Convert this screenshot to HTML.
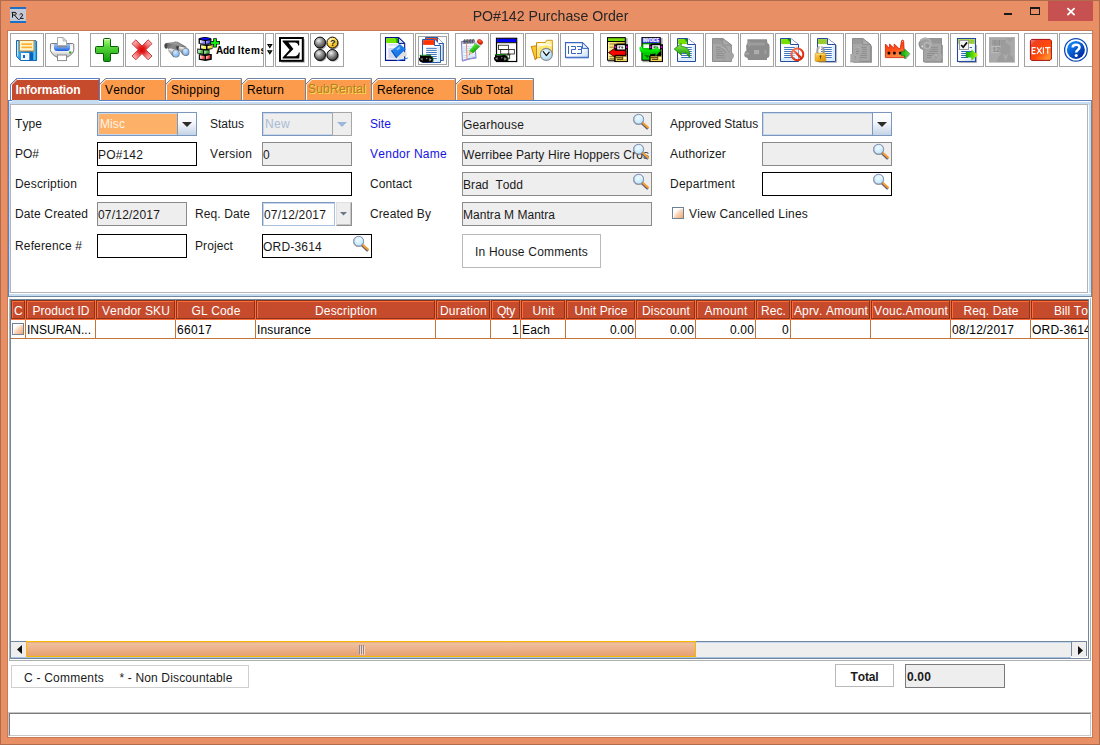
<!DOCTYPE html>
<html><head><meta charset="utf-8"><title>PO#142 Purchase Order</title>
<style>
html,body{margin:0;padding:0}
body{width:1100px;height:745px;position:relative;overflow:hidden;background:#E98F66;font-family:"Liberation Sans",sans-serif;font-size:12px;color:#1a1a1a;font-kerning:none}
div,svg{position:absolute;box-sizing:border-box}
.t{white-space:nowrap;line-height:16px;height:16px}
.b{font-weight:bold}
.tb{background:#fff;border:1px solid #a3a3a3;width:34px;height:34px;top:33px}
.fld{border:1px solid #000;background:#fff;height:24px;line-height:22px;white-space:nowrap;overflow:hidden;padding:1px 0 0 0}
.dis{border-color:#8a8a8a;background:#eee}
.th{top:300px;height:19px;background:#C64B2C;border:1px solid #86361f;box-shadow:inset 1px 1px 0 #ff6c3a;color:#fff;text-align:center;line-height:20px;padding-left:1px;white-space:nowrap;overflow:hidden}
.td{top:320px;height:18px;line-height:20px;white-space:nowrap;overflow:hidden;color:#000}
.tab{top:78px;height:22px}
.tab span{position:absolute;top:4px;line-height:16px;white-space:nowrap}
</style></head><body>

<div style="left:0px;top:0px;width:1100px;height:745px;border:1px solid #b06c4c"></div>
<div style="left:7px;top:30px;width:1086px;height:708px;background:#fff;border:1px solid #c87a55"></div>
<svg style="left:10px;top:7px" width="16" height="16" viewBox="0 0 16 16" ><rect width="16" height="16" fill="#c6cad6"/><rect width="16" height="2" fill="#1e6fc4"/><rect y="14" width="16" height="2" fill="#1e6fc4"/><path d="M2.5 5.4 L2.5 10.6 M1.6 5.4 L5 5.4 Q6.6 5.6 6.2 7.2 Q5.8 8 4.2 8 L2.5 8 M4.4 8 L8.6 12.8" stroke="#161616" stroke-width="1" fill="none"/><path d="M9.6 7.8 Q10.4 6.4 12 6.8 Q13.2 7.6 12.2 9 L10 11.4 L13.6 11.4" stroke="#161616" stroke-width="1" fill="none"/><rect x="9" y="12" width="1" height="1" fill="#2a68c0"/></svg>
<div class="t" id="title" style="left:0;top:6px;width:1101px;text-align:center;font-size:15px;line-height:20px;height:20px;color:#262626;transform:scaleX(0.943)">PO#142 Purchase Order</div>
<div style="left:1004px;top:13px;width:8px;height:2px;background:#1a1a1a"></div>
<div style="left:1030px;top:7px;width:10px;height:8px;border:1px solid #1a1a1a;border-top-width:2px"></div>
<div style="left:1048px;top:1px;width:45px;height:20px;background:#C75050"></div>
<svg style="left:1066px;top:7px" width="10" height="9" viewBox="0 0 10 9"><path d="M1.4 1.1 L8.6 8.1 M8.6 1.1 L1.4 8.1" stroke="#fff" stroke-width="1.8" fill="none"/></svg>
<div class="tb" style="left:10px;"><svg style="left:0px;top:0px" width="32" height="32" viewBox="0 0 32 32" ><defs><linearGradient id="sv1" x1="0" y1="0" x2="1" y2="0"><stop offset="0" stop-color="#8fd4f5"/><stop offset="0.12" stop-color="#3a9fe0"/><stop offset="0.75" stop-color="#0a72c8"/><stop offset="0.9" stop-color="#5ac4f0"/><stop offset="1" stop-color="#1880d0"/></linearGradient></defs><path d="M5.5 6.5 L24.6 6.5 L25.6 7.5 L25.6 26.5 L9.5 26.5 L5.5 22.5 Z" fill="url(#sv1)" stroke="#1668b8" stroke-width="1"/><path d="M6.6 7.5 L6.6 22" stroke="#c8ecff" stroke-width="1"/><rect x="18.5" y="19" width="3.5" height="7" fill="#0860b8"/><rect x="8.5" y="6.5" width="14.5" height="10.5" fill="#fff4cc" stroke="#c4883a" stroke-width="1"/><rect x="10.5" y="9.3" width="10.5" height="1.7" fill="#ffb030"/><rect x="10.5" y="12.5" width="10.5" height="1.7" fill="#ffb030"/><rect x="10" y="19" width="8.2" height="7" fill="#fff"/><rect x="10" y="19" width="8.2" height="7" fill="#e8f0fa" opacity="0.5"/><rect x="12" y="21" width="2" height="3" fill="#1060d0"/></svg></div>
<div class="tb" style="left:45px;"><svg style="left:0px;top:0px" width="32" height="32" viewBox="0 0 32 32" ><defs><linearGradient id="pr1" x1="0" y1="0" x2="0" y2="1"><stop offset="0" stop-color="#e8e8e8"/><stop offset="0.45" stop-color="#fff"/><stop offset="1" stop-color="#b8b8b8"/></linearGradient><linearGradient id="pr2" x1="0" y1="0" x2="0" y2="1"><stop offset="0" stop-color="#9cc0f8"/><stop offset="0.55" stop-color="#5a98f0"/><stop offset="1" stop-color="#1c58dc"/></linearGradient></defs><path d="M4.5 10 Q4.5 9.5 5.5 9.5 L26.5 9.5 Q27.8 9.5 27.8 11 L27.8 16 Q27.5 20 21 23.2 L11 23.2 Q4.5 20 4.4 15.5 Z" fill="url(#pr1)" stroke="#7d7d7d" stroke-width="1"/><path d="M8 10 L24 10 L24 14 Q24 17 21 17 L11 17 Q8 17 8 14 Z" fill="url(#pr2)"/><path d="M11 11 L21 11 L21 13.3 L11 13.3 Z" fill="#8a8a96"/><path d="M11.5 3.5 L17 3.5 L20.5 7 L20.5 11.6 L11.5 11.6 Z" fill="#fff" stroke="#a8a8a8" stroke-width="1"/><path d="M17 3.5 L17 7 L20.5 7 Z" fill="#e4e4e4" stroke="#a8a8a8" stroke-width="0.8"/><circle cx="24.2" cy="18.5" r="1.2" fill="#28b028"/><rect x="11.5" y="21" width="9" height="5.6" fill="#fff" stroke="#8c8c8c" stroke-width="1"/></svg></div>
<div class="tb" style="left:90px;"><svg style="left:0px;top:0px" width="32" height="32" viewBox="0 0 32 32" ><defs><linearGradient id="pl1" x1="0" y1="0" x2="0" y2="1"><stop offset="0" stop-color="#b0ff80"/><stop offset="0.35" stop-color="#5ad83c"/><stop offset="1" stop-color="#0c9a0c"/></linearGradient></defs><path d="M13.5 4.5 L18.5 4.5 Q19.5 4.5 19.5 5.5 L19.5 12.5 L26.5 12.5 Q27.5 12.5 27.5 13.5 L27.5 18.5 Q27.5 19.5 26.5 19.5 L19.5 19.5 L19.5 26.5 Q19.5 27.5 18.5 27.5 L13.5 27.5 Q12.5 27.5 12.5 26.5 L12.5 19.5 L5.5 19.5 Q4.5 19.5 4.5 18.5 L4.5 13.5 Q4.5 12.5 5.5 12.5 L12.5 12.5 L12.5 5.5 Q12.5 4.5 13.5 4.5 Z" fill="url(#pl1)" stroke="#0a5c0a" stroke-width="1"/><path d="M13.7 5.6 L18.3 5.6" stroke="#e8ffd0" stroke-width="1"/></svg></div>
<div class="tb" style="left:125px;"><svg style="left:0px;top:0px" width="32" height="32" viewBox="0 0 32 32" ><defs><radialGradient id="cr1" cx="0.5" cy="0.5" r="0.55"><stop offset="0" stop-color="#dc0000"/><stop offset="0.3" stop-color="#e42020"/><stop offset="0.62" stop-color="#f07070"/><stop offset="1" stop-color="#f8b0b0"/></radialGradient></defs><path d="M9.85 5.83 L16 11.98 L22.15 5.83 L25.97 9.65 L19.82 15.8 L25.97 21.95 L22.15 25.77 L16 19.62 L9.85 25.77 L6.03 21.95 L12.18 15.8 L6.03 9.65 Z" fill="url(#cr1)" stroke="#c02828" stroke-width="0.9" stroke-linejoin="round"/></svg></div>
<div class="tb" style="left:160px;"><svg style="left:0px;top:0px" width="32" height="32" viewBox="0 0 32 32" ><defs><linearGradient id="bn1" x1="0" y1="0" x2="1" y2="0.4"><stop offset="0" stop-color="#4e4e4e"/><stop offset="0.5" stop-color="#8a8a8a"/><stop offset="1" stop-color="#6e6e6e"/></linearGradient><linearGradient id="bn3" x1="0.7" y1="0" x2="0.2" y2="1"><stop offset="0" stop-color="#8c8c8c"/><stop offset="0.28" stop-color="#ececec"/><stop offset="0.55" stop-color="#aaaaaa"/><stop offset="1" stop-color="#4a4a4a"/></linearGradient><radialGradient id="bn2" cx="0.4" cy="0.32" r="0.75"><stop offset="0" stop-color="#d4eaff"/><stop offset="0.55" stop-color="#9cc8fa"/><stop offset="1" stop-color="#6aa4ec"/></radialGradient><filter id="bnb" x="-10%" y="-10%" width="120%" height="120%"><feGaussianBlur stdDeviation="0.35"/></filter></defs><g filter="url(#bnb)"><path d="M3.6 11 Q3.4 9.4 5.4 9 L12.6 8.2 L14 7.5 L16.8 7.8 L25.6 13 L25 16 L18 13 L17 16.4 L8.6 15.4 L4.6 14.6 Z" fill="url(#bn1)"/><path d="M5.6 9.6 L12.8 8.8 L14.2 8.2 L16.4 8.5 L23 12.4 L17.8 11.6 L12.6 10.6 Z" fill="#9c9c9c" opacity="0.75"/><ellipse cx="4.9" cy="12" rx="1.5" ry="2.5" fill="#474747"/><path d="M15 12.6 L18.6 12 L19.4 16 L16.4 17 Z" fill="#3c3c3c"/><path d="M18 12.2 L24.8 13.6 Q27.8 15 27.9 18 L22 21 L17.4 15.6 Z" fill="url(#bn3)"/><path d="M8.6 14.2 L15.6 15.4 Q18 17 18.1 19.6 L12.4 23.2 L6.8 16.4 Z" fill="url(#bn3)"/></g><ellipse cx="15" cy="19.5" rx="3.7" ry="4.1" fill="#707070"/><ellipse cx="24.8" cy="17.9" rx="3.6" ry="4" fill="#707070"/><ellipse cx="14.9" cy="19.4" rx="3.1" ry="3.5" fill="url(#bn2)"/><ellipse cx="24.7" cy="17.8" rx="3" ry="3.4" fill="url(#bn2)"/><circle cx="6.6" cy="14.4" r="0.5" fill="#eee"/></svg></div>
<div class="tb" style="left:275px;"><svg style="left:0px;top:0px" width="32" height="32" viewBox="0 0 32 32" ><rect x="5.2" y="5.2" width="23.6" height="23.6" fill="#9a9a9a" opacity="0.7"/><rect x="4" y="4" width="22.8" height="22.8" fill="#fff" stroke="#000" stroke-width="2"/><path d="M6.6 6.4 L23.2 6.4 L23.2 11.6 L22.2 11.6 Q21.8 8.8 18.8 8.6 L12.4 8.6 L17.4 15 L10.2 22.2 L19.2 22.2 Q22.2 22 22.8 18.6 L23.8 18.6 L23.2 24.4 L6.6 24.4 L6.6 23.4 L13.6 15.8 L6.6 7.6 Z" fill="#000"/></svg></div>
<div class="tb" style="left:310px;"><svg style="left:0px;top:0px" width="32" height="32" viewBox="0 0 32 32" ><defs><radialGradient id="bl1" cx="0.38" cy="0.32" r="0.75"><stop offset="0" stop-color="#f0f0f0"/><stop offset="0.4" stop-color="#9a9a9a"/><stop offset="1" stop-color="#2a2a2a"/></radialGradient><radialGradient id="bl2" cx="0.35" cy="0.3" r="0.8"><stop offset="0" stop-color="#fff8d8"/><stop offset="0.45" stop-color="#ffd848"/><stop offset="1" stop-color="#e8a000"/></radialGradient></defs><circle cx="9.9" cy="9.6" r="5.7" fill="#000" opacity="0.35"/><circle cx="9" cy="8.6" r="5.5" fill="url(#bl1)" stroke="#0a0a0a" stroke-width="1"/><circle cx="22.299999999999997" cy="9.6" r="5.7" fill="#000" opacity="0.35"/><circle cx="21.4" cy="8.6" r="5.5" fill="url(#bl2)" stroke="#0a0a0a" stroke-width="1"/><circle cx="9.9" cy="22" r="5.7" fill="#000" opacity="0.35"/><circle cx="9" cy="21" r="5.5" fill="url(#bl1)" stroke="#0a0a0a" stroke-width="1"/><circle cx="22.299999999999997" cy="22" r="5.7" fill="#000" opacity="0.35"/><circle cx="21.4" cy="21" r="5.5" fill="url(#bl1)" stroke="#0a0a0a" stroke-width="1"/><text x="19" y="11.8" font-family="Liberation Sans" font-weight="bold" font-size="9" fill="#222">?</text></svg></div>
<div class="tb" style="left:380px;"><svg style="left:0px;top:0px" width="32" height="32" viewBox="0 0 32 32" ><defs><linearGradient id="dk1" x1="0" y1="0" x2="1" y2="1"><stop offset="0" stop-color="#2c90f6"/><stop offset="1" stop-color="#0c68dc"/></linearGradient></defs><path d="M4.5 3.6 L17.6 3.6 L23.7 9.4 L23.7 26.4 L4.5 26.4 Z" fill="#f6f8fe" stroke="#00108a" stroke-width="1.1"/><rect x="5.1" y="4.2" width="12" height="4.8" fill="#74e400"/><path d="M14 4.2 L17.1 4.2 L17.1 9 L15.4 9 L15.4 5.8 Z" fill="#0a9800"/><path d="M17.6 3.6 L17.6 9.4 L23.7 9.4 Z" fill="#d0ecf8" stroke="#00108a" stroke-width="1"/><rect x="7.3" y="10" width="9.8" height="1.7" fill="#d8dcf4"/><rect x="7.3" y="14" width="7.2" height="10.2" fill="#d2d7f0"/><path d="M15.2 24.2 L24.9 17 L26 21.2 L15.9 26 Z" fill="#d4d4d0"/><path d="M15.6 24.9 L25.4 18.6 M15.8 25.6 L25.8 20" stroke="#f4f4f0" stroke-width="0.6"/><path d="M15.5 26.6 L26.8 23.5 L26.9 24.4 L15.7 27.3 Z" fill="#2a7ae0"/><path d="M10.1 16.7 L18.9 10.1 L24.9 15.2 L15.2 24.2 Z" fill="url(#dk1)"/><path d="M10.1 16.7 L11 16 L16 23.4 L15.2 24.2 Z" fill="#0a54c0"/><path d="M15.2 15 L18.3 12.6 L19.4 14.2 L16.4 16.6 Z" fill="#78bcfc"/></svg></div>
<div class="tb" style="left:415px;"><svg style="left:0px;top:0px" width="32" height="32" viewBox="0 0 32 32" ><rect x="2.5" y="2.5" width="28" height="28" fill="none" stroke="#a3a3a3" stroke-width="1"/><defs><linearGradient id="dsag" x1="0" y1="0" x2="0" y2="1"><stop offset="0.8" stop-color="#fff"/><stop offset="0.9" stop-color="#d4eafc"/><stop offset="1" stop-color="#eaf5ff"/></linearGradient><linearGradient id="dsah" x1="0" y1="0" x2="1" y2="0"><stop offset="0.78" stop-color="#d4eafc" stop-opacity="0"/><stop offset="0.88" stop-color="#d4eafc"/><stop offset="1" stop-color="#e6f3ff"/></linearGradient></defs><path d="M9.5 3.5 L21.5 3.5 L27.5 9.5 L27.5 26.5 L9.5 26.5 Z" fill="url(#dsag)"/><path d="M9.5 10.5 L27.5 10.5 L27.5 26.5 L9.5 26.5 Z" fill="url(#dsah)"/><rect x="10.1" y="4.1" width="10.9" height="4.5" fill="#f03000"/><path d="M9.5 3.5 L21.5 3.5 L27.5 9.5 L27.5 26.5 L9.5 26.5 Z" fill="none" stroke="#2a5ab0" stroke-width="1"/><path d="M21.5 3.5 L21.5 9.5 L27.5 9.5 Z" fill="#fff"/><path d="M21.5 3.5 L21.5 9.5 L27.5 9.5" fill="none" stroke="#2a5ab0" stroke-width="1" stroke-linejoin="round"/><rect x="26" y="10" width="1.8" height="17" fill="#8a8a8a" opacity="0.5"/><defs><linearGradient id="dsbg" x1="0" y1="0" x2="0" y2="1"><stop offset="0.8" stop-color="#fff"/><stop offset="0.9" stop-color="#d4eafc"/><stop offset="1" stop-color="#eaf5ff"/></linearGradient><linearGradient id="dsbh" x1="0" y1="0" x2="1" y2="0"><stop offset="0.78" stop-color="#d4eafc" stop-opacity="0"/><stop offset="0.88" stop-color="#d4eafc"/><stop offset="1" stop-color="#e6f3ff"/></linearGradient></defs><path d="M6.5 5.5 L18.5 5.5 L24.5 11.5 L24.5 28.5 L6.5 28.5 Z" fill="url(#dsbg)"/><path d="M6.5 12.5 L24.5 12.5 L24.5 28.5 L6.5 28.5 Z" fill="url(#dsbh)"/><rect x="7.1" y="6.1" width="10.9" height="4.8" fill="#ff3300"/><path d="M6.5 5.5 L18.5 5.5 L24.5 11.5 L24.5 28.5 L6.5 28.5 Z" fill="none" stroke="#2a5ab0" stroke-width="1"/><path d="M18.5 5.5 L18.5 11.5 L24.5 11.5 Z" fill="#fff"/><path d="M18.5 5.5 L18.5 11.5 L24.5 11.5" fill="none" stroke="#2a5ab0" stroke-width="1" stroke-linejoin="round"/><rect x="10.2" y="13.850000000000001" width="10.600000000000001" height="0.9" fill="#2a64b6"/><rect x="10.2" y="15.850000000000001" width="10.600000000000001" height="0.9" fill="#2a64b6"/><rect x="10.2" y="17.95" width="10.600000000000001" height="0.9" fill="#2a64b6"/><rect x="10.2" y="19.95" width="10.600000000000001" height="0.9" fill="#2a64b6"/><rect x="10.2" y="22.05" width="10.600000000000001" height="0.9" fill="#2a64b6"/><rect x="10.2" y="24.05" width="10.600000000000001" height="0.9" fill="#2a64b6"/><g transform="translate(2.8,20.9)"><path d="M1.1 0.1 L2.4 1.4 L3.2 0.4 L11.2 0.3 L14.2 3.4 L14 6.8" fill="none" stroke="#0a7a0a" stroke-width="1.1"/><path d="M1.3 0.9 L3 1.2 L11 0.8 Q13.6 2.2 14 4 L13.9 6.9 Q12 7.4 9.7 7.5 L4.2 7.7 Q2 7.4 1.2 6.6 Q0.1 5.4 0.1 4 Q0.4 2.8 1.2 2.5 Z" fill="#000"/><path d="M1.5 4.2 L3.7 3.1 L3.8 5.5 Z" fill="#bdbdbd" stroke="#4a4a4a" stroke-width="0.6"/><path d="M12.8 4.8 L10.5 3.1 L10.5 6.3 Z" fill="#d4d4d4" stroke="#4a4a4a" stroke-width="0.6"/><circle cx="7.9" cy="3.6" r="0.8" fill="#808080"/></g></svg></div>
<div class="tb" style="left:455px;"><svg style="left:0px;top:0px" width="32" height="32" viewBox="0 0 32 32" ><defs><linearGradient id="np1" x1="0.2" y1="0" x2="0.9" y2="0.9"><stop offset="0" stop-color="#78ff48"/><stop offset="0.45" stop-color="#38d020"/><stop offset="0.75" stop-color="#189808"/><stop offset="1" stop-color="#0c6c04"/></linearGradient><radialGradient id="np2" cx="0.38" cy="0.4" r="0.7"><stop offset="0" stop-color="#ff6a38"/><stop offset="0.6" stop-color="#e02810"/><stop offset="1" stop-color="#a81000"/></radialGradient></defs><path d="M5.4 7.6 L18.5 6.8 L20 23.9 Q14 24.4 6.4 26.9 Z" fill="#f6f8ff" stroke="#8484cc" stroke-width="1.1" stroke-linejoin="round"/><path d="M6.5 25.9 Q14 23.6 19.9 23 L20 24.2 Q14 24.6 6.5 27 Z" fill="#9090d4"/><path d="M6 8.4 L18.2 7.6 L18.3 9.4 L6.1 10.2 Z" fill="#dcdcf4"/><path d="M6.30 13.10 L19.00 12.00" stroke="#b4d8f8" stroke-width="0.8"/><path d="M6.35 15.00 L19.10 13.90" stroke="#b4d8f8" stroke-width="0.8"/><path d="M6.40 16.90 L19.20 15.80" stroke="#b4d8f8" stroke-width="0.8"/><path d="M6.45 18.80 L19.30 17.70" stroke="#b4d8f8" stroke-width="0.8"/><path d="M6.50 21.70 L19.40 20.60" stroke="#b4d8f8" stroke-width="0.8"/><path d="M6.55 23.50 L19.50 22.40" stroke="#b4d8f8" stroke-width="0.8"/><path d="M10.4 10 L11 25.3" stroke="#f08060" stroke-width="0.95"/><path d="M7.00 9.90 Q6.90 6.40 8.50 5.50 Q9.00 7.20 7.90 9.60" fill="none" stroke="#222" stroke-width="0.55"/><path d="M8.55 9.84 Q8.45 6.34 10.05 5.44 Q10.55 7.14 9.45 9.54" fill="none" stroke="#222" stroke-width="0.55"/><path d="M10.10 9.78 Q10.00 6.28 11.60 5.38 Q12.10 7.08 11.00 9.48" fill="none" stroke="#222" stroke-width="0.55"/><path d="M11.65 9.72 Q11.55 6.22 13.15 5.32 Q13.65 7.02 12.55 9.42" fill="none" stroke="#222" stroke-width="0.55"/><path d="M13.20 9.66 Q13.10 6.16 14.70 5.26 Q15.20 6.96 14.10 9.36" fill="none" stroke="#222" stroke-width="0.55"/><path d="M14.75 9.60 Q14.65 6.10 16.25 5.20 Q16.75 6.90 15.65 9.30" fill="none" stroke="#222" stroke-width="0.55"/><path d="M16.30 9.54 Q16.20 6.04 17.80 5.14 Q18.30 6.84 17.20 9.24" fill="none" stroke="#222" stroke-width="0.55"/><path d="M12.9 17 L19.7 9.1 L24.2 12.2 L17 19.3 Z" fill="url(#np1)"/><path d="M12.9 17 L17 19.3 L12.9 20.7 Z" fill="#e4c08c"/><path d="M12.9 20.7 L13.05 19.5 L14 20.3 Z" fill="#2a2a2a"/><path d="M19.7 9.1 L20.7 7.9 L25.1 11.1 L24.2 12.2 Z" fill="#e8e8f0" stroke="#a8a8b8" stroke-width="0.4"/><ellipse cx="24" cy="7.8" rx="3.1" ry="2.4" transform="rotate(38 24 7.8)" fill="url(#np2)"/></svg></div>
<div class="tb" style="left:490px;"><svg style="left:0px;top:0px" width="32" height="32" viewBox="0 0 32 32" ><rect x="5.5" y="4.3" width="20.2" height="23.2" fill="#fff" stroke="#000" stroke-width="1.2"/><rect x="6.1" y="4.9" width="19" height="3.3" fill="#0000ff"/><path d="M5.5 8.7 L25.7 8.7" stroke="#000" stroke-width="1"/><rect x="7.6" y="11.2" width="9.8" height="4.2" fill="#fff" stroke="#0c0a00" stroke-width="0.75"/><rect x="9.7" y="15.4" width="13.6" height="4.6" fill="#fff" stroke="#0c0a00" stroke-width="0.75"/><path d="M17.7 15.4 L17.7 20" stroke="#0c0a00" stroke-width="0.75"/><path d="M14 21 L18.6 21 L18.6 24.8 L14 24.8" fill="#fff" stroke="#0c0a00" stroke-width="0.75"/><path d="M16 20 L19.5 20.6" stroke="#0c0a00" stroke-width="0.7"/><g transform="translate(2.8,20.2)"><path d="M1.1 0.1 L2.4 1.4 L3.2 0.4 L11.2 0.3 L14.2 3.4 L14 6.8" fill="none" stroke="#0a7a0a" stroke-width="1.1"/><path d="M1.3 0.9 L3 1.2 L11 0.8 Q13.6 2.2 14 4 L13.9 6.9 Q12 7.4 9.7 7.5 L4.2 7.7 Q2 7.4 1.2 6.6 Q0.1 5.4 0.1 4 Q0.4 2.8 1.2 2.5 Z" fill="#000"/><path d="M1.5 4.2 L3.7 3.1 L3.8 5.5 Z" fill="#bdbdbd" stroke="#4a4a4a" stroke-width="0.6"/><path d="M12.8 4.8 L10.5 3.1 L10.5 6.3 Z" fill="#d4d4d4" stroke="#4a4a4a" stroke-width="0.6"/><circle cx="7.9" cy="3.6" r="0.8" fill="#808080"/></g></svg></div>
<div class="tb" style="left:525px;"><svg style="left:0px;top:0px" width="32" height="32" viewBox="0 0 32 32" ><defs><linearGradient id="fc1" x1="0" y1="0" x2="1" y2="1"><stop offset="0" stop-color="#fffdf0"/><stop offset="0.45" stop-color="#fff4a8"/><stop offset="1" stop-color="#f8d030"/></linearGradient><radialGradient id="fc2" cx="0.4" cy="0.35" r="0.75"><stop offset="0" stop-color="#f0fbff"/><stop offset="1" stop-color="#a0d4f4"/></radialGradient></defs><path d="M10.5 8.5 L19.5 8.5 L20.5 6.3 L26.3 6.3 L26.6 21 L10.5 24 Z" fill="url(#fc1)" stroke="#d89818" stroke-width="1"/><path d="M11.6 10 L25.4 10 L25.4 12 L12 12.4 Z" fill="#fffce8" opacity="0.8"/><path d="M5.2 12.5 L10.5 11.8 L10.6 24 L9.2 25.6 Z" fill="#f8c830" stroke="#d08810" stroke-width="1"/><path d="M10.6 9 L10.6 24.6 L9.2 25.6 L10 24" fill="none" stroke="#c88010" stroke-width="0.8"/><path d="M12.4 12.6 L22 11.2 L22.6 20 L11.6 23.8 Z" fill="#ffe040" opacity="0.6"/><circle cx="20.3" cy="20.4" r="6" fill="url(#fc2)" stroke="#8a8c90" stroke-width="1.1"/><path d="M17.3 17.6 L20.4 21.6 L23.2 18.2" fill="none" stroke="#0a0a0a" stroke-width="1.15" stroke-linejoin="round" stroke-linecap="round"/></svg></div>
<div class="tb" style="left:560px;"><svg style="left:0px;top:0px" width="32" height="32" viewBox="0 0 32 32" ><defs><linearGradient id="n1" x1="0" y1="0" x2="1" y2="1"><stop offset="0.55" stop-color="#fff"/><stop offset="1" stop-color="#c4dcf8"/></linearGradient></defs><path d="M4.5 8.6 L21.4 8.6 L27.4 14.4 L27.4 23.4 L4.5 23.4 Z" fill="url(#n1)" stroke="#3a66c0" stroke-width="1.1"/><path d="M21.4 8.6 L21.4 14.4 L27.4 14.4 Z" fill="#e4f0fc" stroke="#3a66c0" stroke-width="1"/><path d="M5 24.2 L27.6 24.2" stroke="#88a8e0" stroke-width="0.8"/><path d="M7.5 12 L7.5 20" stroke="#3a66c0" stroke-width="1" fill="none"/><path d="M10 12.5 L14.5 12.5 L14.5 15.5 L10.5 15.5 L10.5 19.5 L15 19.5" stroke="#3a66c0" stroke-width="1" fill="none"/><path d="M16 12.5 L20.5 12.5 L20.5 19.5 L16 19.5 M17 15.5 L20.5 15.5" stroke="#3a66c0" stroke-width="1" fill="none"/></svg></div>
<div class="tb" style="left:600px;"><svg style="left:0px;top:0px" width="32" height="32" viewBox="0 0 32 32" ><defs><linearGradient id="po1" x1="0" y1="0" x2="1" y2="0"><stop offset="0" stop-color="#fff0a0"/><stop offset="0.5" stop-color="#f0d860"/><stop offset="1" stop-color="#d8b838"/></linearGradient></defs><rect x="7" y="4" width="19.6" height="24.2" fill="#000" opacity="0.35"/><rect x="6" y="3.1" width="18.8" height="23.6" fill="#000"/><rect x="7" y="4.2" width="16.8" height="2.8" fill="#78e000"/><rect x="7" y="8" width="16.8" height="17.7" fill="url(#po1)"/><path d="M8.4 10 L15 10 M8.4 13.2 L13 13.2 M8.4 22.6 L13.6 22.6 M8.4 24.6 L13.6 24.6" stroke="#6a5810" stroke-width="0.7"/><path d="M15.4 9.4 L24.6 9.4 L24.6 10.2 L27 10.2 L27 28 L13.2 28 L13.2 21.8 L14 21.8 L14 16.4 L13.2 16.4 L13.2 10.2 L15.4 10.2 Z" fill="#000"/><rect x="16.2" y="11.2" width="7.7" height="4.3" fill="#fff"/><path d="M17.4 12.4 Q18.4 11.8 19 12.6 Q19.4 14.2 18.6 14.6 Q17.4 14.6 17.4 12.4 M20.4 12.4 Q22.4 12 22.4 14 Q21.2 15 20.4 14 Z" fill="#555"/><path d="M18.6 12 L20.6 13.4" stroke="#555" stroke-width="0.6"/><rect x="13.9" y="11.8" width="1.3" height="2.4" fill="#e800e8"/><rect x="25" y="11.8" width="1.3" height="2.4" fill="#e800e8"/><rect x="25" y="15.6" width="0.9" height="1" fill="#f0dc70"/><rect x="25" y="17.5" width="0.9" height="1" fill="#f0dc70"/><rect x="25" y="19.4" width="0.9" height="1" fill="#f0dc70"/><rect x="25" y="21.3" width="0.9" height="1" fill="#f0dc70"/><rect x="14.6" y="22.3" width="11.3" height="4.8" fill="#f0d050"/><path d="M14.6 23.7 L21.6 23.7 M16 25.4 L21.6 25.4" stroke="#1a1400" stroke-width="0.8"/><path d="M21.6 22.3 L21.6 26" stroke="#1a1400" stroke-width="0.6"/><rect x="22.9" y="23.4" width="2.3" height="1.5" fill="#fff"/><path d="M7.4 18.6 L13.8 14.2 L13.8 16.4 L24.8 16.4 L24.8 21.2 L13.8 21.2 L13.8 23 Z" fill="#ff0000" stroke="#000" stroke-width="0.7" stroke-linejoin="round"/></svg></div>
<div class="tb" style="left:635px;"><svg style="left:0px;top:0px" width="32" height="32" viewBox="0 0 32 32" ><defs><linearGradient id="iv1" x1="0" y1="0" x2="0" y2="1"><stop offset="0" stop-color="#50ff50"/><stop offset="0.5" stop-color="#00e800"/><stop offset="1" stop-color="#00a800"/></linearGradient></defs><rect x="6.4" y="4" width="20.2" height="24.2" fill="#000" opacity="0.35"/><rect x="5.4" y="3.1" width="19.4" height="23.6" fill="#000"/><rect x="6.4" y="4.2" width="17.4" height="4.6" fill="#2828f8"/><text x="6.9" y="8.3" font-family="Liberation Sans" font-weight="bold" font-size="5.2" fill="#fff" stroke="#fff" stroke-width="0.25" textLength="16.2" lengthAdjust="spacingAndGlyphs">INVOICE</text><rect x="6.4" y="9.4" width="17.4" height="16.3" fill="#00d800"/><rect x="7.4" y="10.4" width="8" height="3.6" fill="#e8ffe8"/><path d="M15.4 9.4 L24.6 9.4 L24.6 10.2 L27 10.2 L27 28 L13.2 28 L13.2 21.8 L14 21.8 L14 16.4 L13.2 16.4 L13.2 10.2 L15.4 10.2 Z" fill="#000"/><rect x="16.2" y="11.2" width="7.7" height="4.3" fill="#fff"/><path d="M17.4 12.4 Q18.4 11.8 19 12.6 Q19.4 14.2 18.6 14.6 Q17.4 14.6 17.4 12.4 M20.4 12.4 Q22.4 12 22.4 14 Q21.2 15 20.4 14 Z" fill="#555"/><path d="M18.6 12 L20.6 13.4" stroke="#555" stroke-width="0.6"/><rect x="13.9" y="11.8" width="1.3" height="2.4" fill="#e800e8"/><rect x="25" y="11.8" width="1.3" height="2.4" fill="#e800e8"/><rect x="25" y="15.6" width="0.9" height="1" fill="#f0dc70"/><rect x="25" y="17.5" width="0.9" height="1" fill="#f0dc70"/><rect x="25" y="19.4" width="0.9" height="1" fill="#f0dc70"/><rect x="25" y="21.3" width="0.9" height="1" fill="#f0dc70"/><rect x="14.6" y="22.3" width="11.3" height="4.8" fill="#f0d050"/><path d="M14.6 23.7 L21.6 23.7 M16 25.4 L21.6 25.4" stroke="#1a1400" stroke-width="0.8"/><path d="M21.6 22.3 L21.6 26" stroke="#1a1400" stroke-width="0.6"/><rect x="22.9" y="23.4" width="2.3" height="1.5" fill="#fff"/><path d="M3.8 13.4 Q3.2 18.6 9 19.8 Q14.8 20.6 19.6 19.2 L19.8 21.8 L24.6 16.6 L19.2 12 L19.4 14.8 Q13 16.6 8.6 15.6 Q5.4 14.6 6.2 12.2 Z" fill="url(#iv1)" stroke="#00c000" stroke-width="0.5"/><path d="M7.8 20.6 L11.6 24.2 L13.4 21.6 Z" fill="#007800"/></svg></div>
<div class="tb" style="left:670px;"><svg style="left:0px;top:0px" width="32" height="32" viewBox="0 0 32 32" ><defs><linearGradient id="dbg" x1="0" y1="0" x2="0" y2="1"><stop offset="0.8" stop-color="#fff"/><stop offset="0.9" stop-color="#d4eafc"/><stop offset="1" stop-color="#eaf5ff"/></linearGradient><linearGradient id="dbh" x1="0" y1="0" x2="1" y2="0"><stop offset="0.78" stop-color="#d4eafc" stop-opacity="0"/><stop offset="0.88" stop-color="#d4eafc"/><stop offset="1" stop-color="#e6f3ff"/></linearGradient></defs><path d="M6.5 4.5 L16.5 4.5 L24.5 10.5 L24.5 27.5 L6.5 27.5 Z" fill="url(#dbg)"/><path d="M6.5 11.5 L24.5 11.5 L24.5 27.5 L6.5 27.5 Z" fill="url(#dbh)"/><rect x="7.1" y="5.1" width="9.299999999999999" height="5" fill="#78e000"/><path d="M6.5 4.5 L16.5 4.5 L24.5 10.5 L24.5 27.5 L6.5 27.5 Z" fill="none" stroke="#2a4aa0" stroke-width="1"/><path d="M16.5 4.5 L16.5 10.5 L24.5 10.5 Z" fill="#fff"/><path d="M16.5 4.5 L16.5 10.5 L24.5 10.5" fill="none" stroke="#2a4aa0" stroke-width="1" stroke-linejoin="round"/><rect x="10.1" y="12.950000000000001" width="10.700000000000001" height="0.9" fill="#2a64b6"/><rect x="10.1" y="14.950000000000001" width="10.700000000000001" height="0.9" fill="#2a64b6"/><rect x="10.1" y="17.0" width="10.700000000000001" height="0.9" fill="#2a64b6"/><rect x="10.1" y="19.05" width="10.700000000000001" height="0.9" fill="#2a64b6"/><rect x="10.1" y="21.05" width="10.700000000000001" height="0.9" fill="#2a64b6"/><rect x="10.1" y="23.1" width="10.700000000000001" height="0.9" fill="#2a64b6"/><path d="M13.2 5.1 L16.4 5.1 L16.4 8.6 Z" fill="#0a9800"/><defs><linearGradient id="gb1" x1="0" y1="0" x2="0" y2="1"><stop offset="0" stop-color="#a8f060"/><stop offset="0.5" stop-color="#48c020"/><stop offset="1" stop-color="#188808"/></linearGradient></defs><path d="M3.2 15 L10.2 9.6 L10.2 12.4 Q16.8 12.6 18.4 18 Q19 20.4 18.4 23.4 Q16 18 10.2 18.2 L10.2 21 Z" fill="url(#gb1)" stroke="#188810" stroke-width="0.8" stroke-linejoin="round"/></svg></div>
<div class="tb" style="left:705px;"><svg style="left:0px;top:0px" width="32" height="32" viewBox="0 0 32 32" ><ellipse cx="24.4" cy="21.8" rx="3.4" ry="3.6" fill="#a2a2a2"/><path d="M6.5 4.5 L16.7 4.5 L25.4 11 L25.4 27.5 L6.5 27.5 Z" fill="#a6a6a6" stroke="#8c8c8c" stroke-width="1"/><rect x="7" y="5" width="9.4" height="5" fill="#9b9b9b"/><path d="M13.4 5 L16.4 5 L16.4 8.4 Z" fill="#929292"/><path d="M16.7 4.5 L16.7 11 L25.4 11 Z" fill="#aaaaaa" stroke="#8c8c8c" stroke-width="0.9"/><path d="M10 13.3 L14.6 13.3 M17 13.3 L20.8 13.3 M10 15.3 L14.6 15.3 M18.4 15.3 L20.8 15.3 M10 17.4 L17 17.4 M11 19.5 L17.6 19.5 M11 21.5 L18 21.5 M11 23.6 L18 23.6" stroke="#8c8c8c" stroke-width="0.9"/><path d="M10.2 19.2 L11.6 20.4 L10.2 21.6 M10.2 22 L11.6 23.2 L10.2 24.4" stroke="#8e8e8e" stroke-width="0.7" fill="none"/><path d="M14.8 12.4 Q19.6 14.4 21.6 18.6" stroke="#8e8e8e" stroke-width="3.2" fill="none"/><path d="M14.8 12.4 Q19.6 14.4 21.6 18.6" stroke="#adadad" stroke-width="1.8" fill="none"/><ellipse cx="24.4" cy="21.8" rx="3.2" ry="3.4" fill="#a4a4a4"/><path d="M17 20 L17 27 M19 18.4 L19 27" stroke="#989898" stroke-width="0.7"/></svg></div>
<div class="tb" style="left:740px;"><svg style="left:0px;top:0px" width="32" height="32" viewBox="0 0 32 32" ><defs><filter id="gpb" x="-10%" y="-10%" width="120%" height="120%"><feGaussianBlur stdDeviation="0.5"/></filter></defs><g filter="url(#gpb)"><path d="M6.4 5.2 L26 5.2 L26.4 9 Q28.8 10 28.6 13 L28.4 22 Q28 24 26 24 L26 26 L7 26 L6.6 24 Q3.4 23.4 3.2 21 Q3.4 17.6 5.4 16.6 L5 11.4 L6.4 10 Z" fill="#8c8c8c"/><path d="M5.4 10 L9 6.4 L9 8.4 L24 8.4 L24 11.6 L9 11.6 L9 13.6 Z" fill="#9c9c9c"/><rect x="13" y="16" width="5.2" height="4.2" fill="#adadad"/><rect x="23.4" y="16" width="2" height="4.2" fill="#9e9e9e"/><path d="M4.4 19.6 Q5.8 17.4 8 19 L8 21 Q5.6 20 4.4 21.4 Z" fill="#a6a6a6"/></g></svg></div>
<div class="tb" style="left:775px;"><svg style="left:0px;top:0px" width="32" height="32" viewBox="0 0 32 32" ><defs><linearGradient id="dng" x1="0" y1="0" x2="0" y2="1"><stop offset="0.8" stop-color="#fff"/><stop offset="0.9" stop-color="#d4eafc"/><stop offset="1" stop-color="#eaf5ff"/></linearGradient><linearGradient id="dnh" x1="0" y1="0" x2="1" y2="0"><stop offset="0.78" stop-color="#d4eafc" stop-opacity="0"/><stop offset="0.88" stop-color="#d4eafc"/><stop offset="1" stop-color="#e6f3ff"/></linearGradient></defs><path d="M4.5 4.5 L14.5 4.5 L22.5 10.5 L22.5 27.5 L4.5 27.5 Z" fill="url(#dng)"/><path d="M4.5 11.5 L22.5 11.5 L22.5 27.5 L4.5 27.5 Z" fill="url(#dnh)"/><rect x="5.1" y="5.1" width="9.3" height="5" fill="#78e000"/><path d="M4.5 4.5 L14.5 4.5 L22.5 10.5 L22.5 27.5 L4.5 27.5 Z" fill="none" stroke="#2a4aa0" stroke-width="1"/><path d="M14.5 4.5 L14.5 10.5 L22.5 10.5 Z" fill="#fff"/><path d="M14.5 4.5 L14.5 10.5 L22.5 10.5" fill="none" stroke="#2a4aa0" stroke-width="1" stroke-linejoin="round"/><rect x="8.1" y="12.950000000000001" width="10.700000000000001" height="0.9" fill="#2a64b6"/><rect x="8.1" y="14.950000000000001" width="10.700000000000001" height="0.9" fill="#2a64b6"/><rect x="8.1" y="17.0" width="10.700000000000001" height="0.9" fill="#2a64b6"/><rect x="8.1" y="19.05" width="10.700000000000001" height="0.9" fill="#2a64b6"/><rect x="8.1" y="21.05" width="10.700000000000001" height="0.9" fill="#2a64b6"/><rect x="8.1" y="23.1" width="10.700000000000001" height="0.9" fill="#2a64b6"/><path d="M11.2 5.1 L14.4 5.1 L14.4 8.6 Z" fill="#0a9800"/><defs><linearGradient id="dn2" x1="0" y1="0" x2="1" y2="1"><stop offset="0" stop-color="#f88868"/><stop offset="0.5" stop-color="#e83818"/><stop offset="1" stop-color="#d02808"/></linearGradient></defs><circle cx="21.4" cy="20.4" r="5.9" fill="#fff" fill-opacity="0.45" stroke="url(#dn2)" stroke-width="2"/><path d="M17.4 16.2 L25.6 24.4" stroke="url(#dn2)" stroke-width="2.2"/></svg></div>
<div class="tb" style="left:810px;"><svg style="left:0px;top:0px" width="32" height="32" viewBox="0 0 32 32" ><path d="M8 28.4 L25.6 28.4 L25.6 11" stroke="#9a9a9a" stroke-width="1" fill="none" opacity="0.7"/><defs><linearGradient id="dlg" x1="0" y1="0" x2="0" y2="1"><stop offset="0.8" stop-color="#fff"/><stop offset="0.9" stop-color="#d4eafc"/><stop offset="1" stop-color="#eaf5ff"/></linearGradient><linearGradient id="dlh" x1="0" y1="0" x2="1" y2="0"><stop offset="0.78" stop-color="#d4eafc" stop-opacity="0"/><stop offset="0.88" stop-color="#d4eafc"/><stop offset="1" stop-color="#e6f3ff"/></linearGradient></defs><path d="M6.5 4.5 L16.5 4.5 L24.5 10.5 L24.5 27.5 L6.5 27.5 Z" fill="url(#dlg)"/><path d="M6.5 11.5 L24.5 11.5 L24.5 27.5 L6.5 27.5 Z" fill="url(#dlh)"/><rect x="7.1" y="5.1" width="9.299999999999999" height="5" fill="#98cc30"/><path d="M6.5 4.5 L16.5 4.5 L24.5 10.5 L24.5 27.5 L6.5 27.5 Z" fill="none" stroke="#2a4aa0" stroke-width="1"/><path d="M16.5 4.5 L16.5 10.5 L24.5 10.5 Z" fill="#fff"/><path d="M16.5 4.5 L16.5 10.5 L24.5 10.5" fill="none" stroke="#2a4aa0" stroke-width="1" stroke-linejoin="round"/><rect x="10.1" y="12.950000000000001" width="10.700000000000001" height="0.9" fill="#2a64b6"/><rect x="10.1" y="14.950000000000001" width="10.700000000000001" height="0.9" fill="#2a64b6"/><rect x="10.1" y="17.0" width="10.700000000000001" height="0.9" fill="#2a64b6"/><rect x="10.1" y="19.05" width="10.700000000000001" height="0.9" fill="#2a64b6"/><rect x="10.1" y="21.05" width="10.700000000000001" height="0.9" fill="#2a64b6"/><rect x="10.1" y="23.1" width="10.700000000000001" height="0.9" fill="#2a64b6"/><defs><linearGradient id="pk1" x1="0" y1="0" x2="1" y2="1"><stop offset="0" stop-color="#ffd860"/><stop offset="0.5" stop-color="#f0b020"/><stop offset="1" stop-color="#d88c00"/></linearGradient><linearGradient id="pk2" x1="0" y1="0" x2="1" y2="0"><stop offset="0" stop-color="#a0a0a0"/><stop offset="0.35" stop-color="#d2d2d2"/><stop offset="0.5" stop-color="#f4f4f4"/><stop offset="0.65" stop-color="#c4c4c4"/><stop offset="1" stop-color="#989898"/></linearGradient></defs><path d="M6.4 19.799999999999997 L6.4 16.2 Q6.4 13.1 9.5 13.1 Q12.600000000000001 13.1 12.600000000000001 16.2 L12.600000000000001 19.799999999999997" fill="none" stroke="url(#pk2)" stroke-width="2.1"/><rect x="4.2" y="19.2" width="10.6" height="8.2" rx="0.8" fill="url(#pk1)" stroke="#c88a10" stroke-width="0.6"/><path d="M4.7 20.2 L14.2 20.2" stroke="#ffe890" stroke-width="0.8"/><circle cx="9.5" cy="22.299999999999997" r="0.95" fill="#6e4204"/><path d="M8.9 22.6 L10.100000000000001 22.6 L9.8 25.2 L9.2 25.2 Z" fill="#6e4204"/></svg></div>
<div class="tb" style="left:845px;"><svg style="left:0px;top:0px" width="32" height="32" viewBox="0 0 32 32" ><path d="M7.4 5.4 L17 5.4 L25.9 12 L25.9 28.7 L7.4 28.7 Z" fill="#8f8f8f"/><path d="M6.5 4.5 L16.7 4.5 L24.6 10.6 L24.6 27.4 L6.5 27.4 Z" fill="#a7a7a7" stroke="#8c8c8c" stroke-width="1"/><rect x="7" y="5" width="9.4" height="5" fill="#9a9a9a"/><path d="M16.7 4.5 L16.7 10.6 L24.6 10.6 Z" fill="#acacac" stroke="#8c8c8c" stroke-width="0.9"/><path d="M15.2 13.3 L20.8 13.3 M16 15.3 L20.8 15.3 M16 17.4 L20.8 17.4 M15.2 19.5 L20.8 19.5 M14.6 21.5 L20.8 21.5 M14.6 23.6 L20.8 23.6 M10 17.4 L13.4 17.4 M10 19.5 L12.6 19.5" stroke="#8a8a8a" stroke-width="0.9"/><path d="M9.2 14.2 Q11.4 11.6 14 13.6 Q14.6 15.4 13 16" stroke="#b0b0b0" stroke-width="1.1" fill="none"/><path d="M9.6 15 L13.6 15" stroke="#989898" stroke-width="0.8"/><rect x="4.3" y="20" width="9.8" height="8" fill="#a9a9a9"/><path d="M4.3 28 L14.1 28 L14.1 20.6" stroke="#9a9a9a" stroke-width="0.8" fill="none"/><circle cx="9.2" cy="22.8" r="0.85" fill="#979797"/><path d="M8.7 23 L9.7 23 L9.5 25.6 L8.9 25.6 Z" fill="#979797"/></svg></div>
<div class="tb" style="left:880px;"><svg style="left:0px;top:0px" width="32" height="32" viewBox="0 0 32 32" ><defs><linearGradient id="fa1" x1="0" y1="0" x2="0.3" y2="1"><stop offset="0" stop-color="#ff2800"/><stop offset="0.6" stop-color="#ff5018"/><stop offset="1" stop-color="#ff8840"/></linearGradient><linearGradient id="fa2" x1="0" y1="0" x2="1" y2="0"><stop offset="0" stop-color="#10a010"/><stop offset="1" stop-color="#58e838"/></linearGradient></defs><path d="M4.4 23.6 L4.4 10 L8.6 14.4 L8.6 10 L13.2 14.4 L13.2 10 L18 14.6 L19.2 14.6 L20.6 6.6 Q21.6 5.6 22.6 6.6 L23.6 23.6 Z" fill="url(#fa1)" stroke="#c82000" stroke-width="0.8" stroke-linejoin="round"/><path d="M21 7.6 L22.2 7.2" stroke="#ffd8c8" stroke-width="0.9"/><rect x="6.6" y="17.8" width="2.6" height="2.6" rx="0.6" fill="#0a0408"/><rect x="12.1" y="17.8" width="2.6" height="2.6" rx="0.6" fill="#0a0818"/><rect x="17.9" y="17.8" width="2.6" height="2.6" rx="0.6" fill="#0a1028"/><path d="M20.4 17.4 L23.6 17.4 L23.6 15 L28.6 19.6 L23.8 24.4 L23.6 21.8 L20.4 21.8 Z" fill="url(#fa2)" stroke="#0a7a0a" stroke-width="0.6" stroke-linejoin="round"/><path d="M23.6 24 L24.6 25 L28.8 20.4" stroke="#222" stroke-width="0.8" fill="none" opacity="0.6"/></svg></div>
<div class="tb" style="left:915px;"><svg style="left:0px;top:0px" width="32" height="32" viewBox="0 0 32 32" ><path d="M26 11 L26.9 11 L26.9 28.7 L8.4 28.7 L8.4 28 L26 28 Z" fill="#959595"/><rect x="7.6" y="4.6" width="17.9" height="23" fill="#a6a6a6" stroke="#8e8e8e" stroke-width="1"/><rect x="8.1" y="5.1" width="16.9" height="4.4" fill="#969696"/><path d="M14.8 13.3 L21.9 13.3 M14.8 15.3 L21.9 15.3 M13 17.4 L21.9 17.4 M11 19.5 L21.9 19.5 M11 21.5 L16.6 21.5 M11 23.6 L15 23.6" stroke="#8a8a8a" stroke-width="0.9"/><path d="M16 26 Q15 21.6 19 20.4 L18.6 18.6 L22.6 20.6 L20 23.6 L19.6 22 Q17.4 22.8 18.6 26 Z" fill="#b0b0b0" stroke="#939393" stroke-width="0.5"/><path d="M21 19.8 Q26 19.6 27.4 21.4 Q26.4 25.6 21.6 27" fill="#aaaaaa" opacity="0.7"/><circle cx="9.3" cy="10.1" r="6.5" fill="#9e9e9e"/><path d="M4.6 6.4 Q8.6 2.8 13.6 6 Q15.8 8.6 15.2 11.4" stroke="#b2b2b2" stroke-width="1.5" fill="none"/><circle cx="11.2" cy="11.6" r="3.1" fill="none" stroke="#b6b6b6" stroke-width="1.3"/><circle cx="11.6" cy="12" r="1.6" fill="#949494"/><path d="M3.6 8 Q2.6 12 5.4 14.6" stroke="#8e8e8e" stroke-width="1.4" fill="none"/><ellipse cx="6.3" cy="12.4" rx="0.6" ry="0.9" fill="#f6f6f6"/></svg></div>
<div class="tb" style="left:950px;"><svg style="left:0px;top:0px" width="32" height="32" viewBox="0 0 32 32" ><defs><linearGradient id="ca1" x1="0" y1="0" x2="1" y2="0"><stop offset="0" stop-color="#08a808"/><stop offset="0.55" stop-color="#58d810"/><stop offset="1" stop-color="#d8f800"/></linearGradient><linearGradient id="ca2" x1="0" y1="0" x2="1" y2="1"><stop offset="0.5" stop-color="#fff"/><stop offset="1" stop-color="#c8e0fa"/></linearGradient></defs><path d="M8 28.4 L25.6 28.4 L25.6 11" stroke="#8a8a8a" stroke-width="1" fill="none" opacity="0.7"/><rect x="6.5" y="4.5" width="18" height="23" fill="url(#ca2)" stroke="#2a4aa0" stroke-width="1.1"/><rect x="7.2" y="5.2" width="16.6" height="4.6" fill="#98cc30"/><path d="M18.6 13.5 L21 13.5 M10.2 17.5 L21 17.5 M10.2 19.5 L17 19.5 M10.2 21.5 L17 21.5 M10.2 23.5 L17 23.5" stroke="#2a6ab8" stroke-width="1"/><rect x="8.5" y="6.5" width="9" height="9" fill="#f4f4f4" stroke="#9a9a9a" stroke-width="1"/><path d="M10.2 11 L12.2 13.2 L16 8.4" stroke="#0a0a0a" stroke-width="1.7" fill="none"/><path d="M14.8 18 L20.4 18 L20.4 15.2 L27 21 L20.4 26.8 L20.4 23.6 L14.8 23.6 Z" fill="url(#ca1)"/></svg></div>
<div class="tb" style="left:985px;"><svg style="left:0px;top:0px" width="32" height="32" viewBox="0 0 32 32" ><rect x="3" y="3" width="26" height="25.6" fill="#a9a9a9"/><path d="M3.5 3.5 L28.5 3.5 L28.5 28" stroke="#b6b6b6" stroke-width="0.8" fill="none"/><path d="M7 6 L7 11.6 M8.8 6 L8.8 11.6 M10 6 L10 11.6 M12 6 L12 11.6 M13.6 6 L13.6 11.6" stroke="#8c8c8c" stroke-width="1"/><rect x="14.6" y="6" width="5" height="5.6" fill="#9a9a9a"/><rect x="5" y="12.4" width="10" height="6" fill="#b2b2b2"/><path d="M5 12.4 L15 12.4 M5 18.4 L13 18.4" stroke="#c0c0c0" stroke-width="0.8"/><text x="6.4" y="17.6" font-family="Liberation Mono" font-weight="bold" font-size="6.6" fill="#8a8a8a">12</text><path d="M11 28 Q11.4 22 15.4 20.6 Q13.6 18 14.2 14 Q15 9.6 19.6 9.4 Q24 9.6 24.6 14 Q25 18 23.4 20.6 Q27.6 22 28 28 Z" fill="#9c9c9c"/><path d="M17.4 20 L19.6 26 L21.8 20 M19 20.6 L19.6 24 L20.4 20.6" stroke="#b0b0b0" stroke-width="0.8" fill="none"/><path d="M20 4 L27.6 4 L24 8.6 Z" fill="#a0a0a0"/></svg></div>
<div class="tb" style="left:1024px;"><svg style="left:0px;top:0px" width="32" height="32" viewBox="0 0 32 32" ><defs><linearGradient id="ex1" x1="0" y1="0" x2="1" y2="1"><stop offset="0" stop-color="#e89898"/><stop offset="0.18" stop-color="#f04020"/><stop offset="0.55" stop-color="#ff4808"/><stop offset="0.85" stop-color="#ff9030"/><stop offset="1" stop-color="#ff8020"/></linearGradient></defs><path d="M6.6 5.4 L25 5.4 L26.4 6.8 L26.4 25 L25 26.4 L6.6 26.4 L5.4 25 L5.4 6.8 Z" fill="url(#ex1)" stroke="#a41010" stroke-width="1"/><g stroke="#fff" stroke-width="1.15" fill="none"><path d="M10.6 13.6 L7.2 13.6 L7.2 19.6 L10.6 19.6 M7.2 16.5 L10.2 16.5"/><path d="M12 13.4 L16.6 19.8 M16.6 13.4 L12 19.8"/><path d="M18.4 13.2 L18.4 19.8"/><path d="M20 13.6 L25.4 13.6 M22.7 13.6 L22.7 19.8"/></g></svg></div>
<div class="tb" style="left:1059px;width:33px;border-right:none;overflow:hidden"><svg style="left:0px;top:0px" width="32" height="32" viewBox="0 0 32 32" ><defs><linearGradient id="hp1" x1="0.15" y1="0.1" x2="0.85" y2="0.9"><stop offset="0" stop-color="#1488ff"/><stop offset="0.5" stop-color="#0858cc"/><stop offset="1" stop-color="#00289c"/></linearGradient></defs><circle cx="15.9" cy="15.9" r="11.3" fill="#fff" stroke="#0c4cb4" stroke-width="1.3"/><circle cx="15.9" cy="15.9" r="9" fill="url(#hp1)"/><path d="M12.7 13.5 Q12.7 10.7 16.1 10.7 Q19.5 10.7 19.5 13.3 Q19.5 14.8 17.8 16 Q16.2 17 16.2 18.6" fill="none" stroke="#fff" stroke-width="2.5" stroke-linecap="butt"/><circle cx="16.2" cy="21.5" r="1.55" fill="#fff"/></svg></div>
<div class="tb" style="left:195px;width:69px;overflow:hidden"><svg style="left:0px;top:0px" width="32" height="32" viewBox="0 0 32 32" ><defs><linearGradient id="ab1" x1="0" y1="0" x2="1" y2="0.3"><stop offset="0.05" stop-color="#ffffff"/><stop offset="0.9" stop-color="#8484f6"/></linearGradient><linearGradient id="ab2" x1="0" y1="0" x2="1" y2="0.3"><stop offset="0.05" stop-color="#b8b8ff"/><stop offset="0.9" stop-color="#4444e6"/></linearGradient><linearGradient id="ab3" x1="0" y1="0" x2="1" y2="0.3"><stop offset="0.05" stop-color="#fffff4"/><stop offset="0.9" stop-color="#f2f23c"/></linearGradient><linearGradient id="ab4" x1="0" y1="0" x2="1" y2="0.3"><stop offset="0.05" stop-color="#ffffa8"/><stop offset="0.9" stop-color="#e6dc1c"/></linearGradient><linearGradient id="ab5" x1="0" y1="0" x2="1" y2="0.3"><stop offset="0.05" stop-color="#e4ffe4"/><stop offset="0.9" stop-color="#3cb03c"/></linearGradient><linearGradient id="ab6" x1="0" y1="0" x2="1" y2="0.3"><stop offset="0.05" stop-color="#c4f4c4"/><stop offset="0.9" stop-color="#2c9c2c"/></linearGradient><linearGradient id="ab7" x1="0" y1="0" x2="1" y2="0.3"><stop offset="0.05" stop-color="#fff4f4"/><stop offset="0.9" stop-color="#f23c3c"/></linearGradient><linearGradient id="ab8" x1="0" y1="0" x2="1" y2="0.3"><stop offset="0.05" stop-color="#ffd4d4"/><stop offset="0.9" stop-color="#e42c2c"/></linearGradient></defs><ellipse cx="9" cy="5" rx="6.4" ry="1.9" fill="#000"/><path d="M2.6 4.8 L15.4 4.8 L15.4 9.8 L9.4 10.6 L2.6 9.8 Z" fill="#000"/><ellipse cx="9.3" cy="4.8" rx="4.5" ry="1.1" fill="#0606f0"/><path d="M3.9 6.1 L9 6.9 L9 9.9 L3.9 9.3 Z" fill="url(#ab1)"/><path d="M10 6.9 L14.5 6.3 L14.5 9.3 L10 9.8 Z" fill="url(#ab2)"/><path d="M4.1 10.2 L16.5 10.2 L16.5 15 L10.8 15.9 L4.1 15.2 Z" fill="#000"/><path d="M5.1 11.3 L10 12 L10 15.2 L5.1 14.6 Z" fill="url(#ab3)"/><path d="M11.5 12 L16.2 11.2 L16.2 14.2 L11.5 14.8 Z" fill="url(#ab4)"/><path d="M1.3 14.4 L7 15.2 L13.5 15.2 L13.5 20 L7.6 20.6 L1.3 19.6 Z" fill="#000"/><path d="M2.1 15.5 L7.1 16.3 L7.1 19.7 L2.1 19 Z" fill="url(#ab5)"/><path d="M8.1 16.6 L13 16.4 L13 19.4 L8.1 19.9 Z" fill="url(#ab6)"/><path d="M2.8 20.2 L15.8 20 L15.8 25.8 L9.4 27 L2.8 25.8 Z" fill="#000"/><path d="M3.9 21.3 L8.8 22 L8.8 25.6 L3.9 24.8 Z" fill="url(#ab7)"/><path d="M10 22 L14.3 21.1 L14.3 24.6 L10 25.3 Z" fill="url(#ab8)"/><path d="M17.2 4.2 L20.8 4.2 L20.8 7.1 L23.9 7.1 L23.9 10.5 L20.8 10.5 L20.8 13.6 L17.2 13.6 L17.2 10.5 L14.5 10.5 L14.5 7.1 L17.2 7.1 Z" fill="#000"/><path d="M17.9 4.9 L20.1 4.9 L20.1 7.7 L23.1 7.7 L23.1 9.9 L20.1 9.9 L20.1 12.8 L17.9 12.8 L17.9 9.9 L15.1 9.9 L15.1 7.7 L17.9 7.7 Z" fill="#10ec10"/></svg><div class="t b" style="left:20px;top:9px;font-size:10px;color:#000;letter-spacing:-0.15px">Add <span style="letter-spacing:0.55px">Items</span></div></div>
<div class="tb" style="left:265px;width:9px"><svg style="left:0px;top:0px" width="7" height="32" viewBox="0 0 7 32" ><path d="M0.9 10 L6.7 10 L3.8 14.6 Z" fill="#000"/><path d="M3.3 11 L4.3 11 L3.8 12 Z" fill="#fff"/><path d="M0.9 16.2 L6.7 16.2 L3.8 20.8 Z" fill="#000"/><path d="M3.3 17.2 L4.3 17.2 L3.8 18.2 Z" fill="#fff"/></svg></div>
<div class="tab" style="left:99px;width:67px"><svg width="67" height="22" viewBox="0 0 67 22" style="left:0;top:0"><path d="M0.5 22 L0.5 6.5 L6.5 0.5 L66.5 0.5 L66.5 22 Z" fill="#FC9B4B"/><path d="M1.5 22 L1.5 6.9 L6.9 1.5 L65.5 1.5" fill="none" stroke="#fff" stroke-width="1"/><path d="M0.5 22 L0.5 6.5 L6.5 0.5 L66.5 0.5 L66.5 22" fill="none" stroke="#6d86a3" stroke-width="1"/></svg><span style="left:6px;color:#000;font-weight:normal;letter-spacing:0.217px;">Vendor</span></div>
<div class="tab" style="left:165px;width:77px"><svg width="77" height="22" viewBox="0 0 77 22" style="left:0;top:0"><path d="M0.5 22 L0.5 6.5 L6.5 0.5 L76.5 0.5 L76.5 22 Z" fill="#FC9B4B"/><path d="M1.5 22 L1.5 6.9 L6.9 1.5 L75.5 1.5" fill="none" stroke="#fff" stroke-width="1"/><path d="M0.5 22 L0.5 6.5 L6.5 0.5 L76.5 0.5 L76.5 22" fill="none" stroke="#6d86a3" stroke-width="1"/></svg><span style="left:6px;color:#000;font-weight:normal;letter-spacing:0.287px;">Shipping</span></div>
<div class="tab" style="left:241px;width:65px"><svg width="65" height="22" viewBox="0 0 65 22" style="left:0;top:0"><path d="M0.5 22 L0.5 6.5 L6.5 0.5 L64.5 0.5 L64.5 22 Z" fill="#FC9B4B"/><path d="M1.5 22 L1.5 6.9 L6.9 1.5 L63.5 1.5" fill="none" stroke="#fff" stroke-width="1"/><path d="M0.5 22 L0.5 6.5 L6.5 0.5 L64.5 0.5 L64.5 22" fill="none" stroke="#6d86a3" stroke-width="1"/></svg><span style="left:6px;color:#000;font-weight:normal;letter-spacing:0.164px;">Return</span></div>
<div class="tab" style="left:305px;width:67px"><svg width="67" height="22" viewBox="0 0 67 22" style="left:0;top:0"><path d="M0.5 22 L0.5 6.5 L6.5 0.5 L66.5 0.5 L66.5 22 Z" fill="#FC9B4B"/><path d="M1.5 22 L1.5 6.9 L6.9 1.5 L65.5 1.5" fill="none" stroke="#fff" stroke-width="1"/><path d="M0.5 22 L0.5 6.5 L6.5 0.5 L66.5 0.5 L66.5 22" fill="none" stroke="#6d86a3" stroke-width="1"/></svg><span style="left:6px;color:#b47c2a;font-weight:normal;text-shadow:1px 1px 0 #f6e04c;top:3px;margin-left:-3px;letter-spacing:0.218px;">SubRental</span></div>
<div class="tab" style="left:371px;width:85px"><svg width="85" height="22" viewBox="0 0 85 22" style="left:0;top:0"><path d="M0.5 22 L0.5 6.5 L6.5 0.5 L84.5 0.5 L84.5 22 Z" fill="#FC9B4B"/><path d="M1.5 22 L1.5 6.9 L6.9 1.5 L83.5 1.5" fill="none" stroke="#fff" stroke-width="1"/><path d="M0.5 22 L0.5 6.5 L6.5 0.5 L84.5 0.5 L84.5 22" fill="none" stroke="#6d86a3" stroke-width="1"/></svg><span style="left:6px;color:#000;font-weight:normal;letter-spacing:0.182px;">Reference</span></div>
<div class="tab" style="left:455px;width:79px"><svg width="79" height="22" viewBox="0 0 79 22" style="left:0;top:0"><path d="M0.5 22 L0.5 6.5 L6.5 0.5 L78.5 0.5 L78.5 22 Z" fill="#FC9B4B"/><path d="M1.5 22 L1.5 6.9 L6.9 1.5 L77.5 1.5" fill="none" stroke="#fff" stroke-width="1"/><path d="M0.5 22 L0.5 6.5 L6.5 0.5 L78.5 0.5 L78.5 22" fill="none" stroke="#6d86a3" stroke-width="1"/></svg><span style="left:6px;color:#000;font-weight:normal;letter-spacing:0.071px;">Sub Total</span></div>
<div class="tab" style="left:10px;width:90px"><svg width="90" height="22" viewBox="0 0 90 22" style="left:0;top:0"><path d="M0.5 22 L0.5 6.5 L6.5 0.5 L89.5 0.5 L89.5 22 Z" fill="#C64B2C"/><path d="M1.5 22 L1.5 6.9 L6.9 1.5 L88.5 1.5" fill="none" stroke="#fff" stroke-width="1"/><path d="M0.5 22 L0.5 6.5 L6.5 0.5 L89.5 0.5 L89.5 22" fill="none" stroke="#5b7ec4" stroke-width="1"/></svg><span style="left:5.6px;color:#fff;font-weight:bold;letter-spacing:-0.090px;">Information</span></div>
<div style="left:8px;top:100px;width:1084px;height:197px;background:#c5dcf2;border:1px solid #5b7ec4;border-bottom-color:#76889e;border-right-color:#76889e"></div>
<div style="left:9px;top:101px;width:1082px;height:1px;background:#fff"></div>
<div style="left:9px;top:293px;width:1082px;height:1px;background:#fff"></div>
<div style="left:10px;top:104px;width:1078px;height:189px;background:#fff;border:1px solid #b4b4b4"></div>
<div style="left:1088px;top:105px;width:1px;height:188px;background:#fff"></div>
<div style="left:12px;top:100px;width:87px;height:1px;background:#c5dcf2"></div>
<div style="left:12px;top:101px;width:87px;height:1px;background:#c5dcf2"></div>
<div class="t" style="left:15px;top:116px;letter-spacing:0.081px;color:#1a1a1a">Type</div>
<div style="left:97px;top:112px;width:100px;height:24px;border:1px solid #7b97bd;background:#FDB068;box-shadow:inset 0 0 0 1px #c9d8ea"></div>
<div class="t" style="left:100px;top:116px;letter-spacing:0.084px;color:#fff3e6">Misc</div>
<div style="left:177px;top:112px;width:20px;height:24px;border:1px solid #7b97bd;background:linear-gradient(#fff,#f4f7fb 45%,#c3d3e6)"></div>
<svg style="left:182px;top:122px" width="10" height="5" viewBox="0 0 10 5"><path d="M0 0 L10 0 L5 5 Z" fill="#2b2b2b"/></svg>
<div class="t" style="left:210px;top:116px;letter-spacing:-0.003px;color:#1a1a1a">Status</div>
<div style="left:262px;top:112px;width:90px;height:24px;border:1px solid #7b97bd;background:#eee;box-shadow:inset 0 0 0 1px #c9d8ea"></div>
<div class="t" style="left:265px;top:116px;letter-spacing:0.331px;color:#a9bcd6">New</div>
<div style="left:332px;top:112px;width:20px;height:24px;border:1px solid #a6a6a6;background:#eee"></div>
<svg style="left:337px;top:122px" width="10" height="5" viewBox="0 0 10 5"><path d="M0 0 L10 0 L5 5 Z" fill="#9db7da"/></svg>
<div class="t" style="left:370px;top:116px;letter-spacing:0.081px;color:#1414e6">Site</div>
<div class="fld dis" style="left:462px;top:112px;width:190px;letter-spacing:0.181px;">Gearhouse<svg style="left:170px;top:0px" width="18" height="18" viewBox="0 0 18 18" ><defs><radialGradient id="mg" cx="0.42" cy="0.4" r="0.75"><stop offset="0" stop-color="#eefaff"/><stop offset="0.6" stop-color="#c8ecfc"/><stop offset="1" stop-color="#a8d8f4"/></radialGradient></defs><path d="M9.2 10.7 L14.2 15.4" stroke="#5e5e78" stroke-width="2.2" stroke-linecap="round"/><path d="M10 9.9 L15 14.6" stroke="#f4a030" stroke-width="2.1" stroke-linecap="round"/><circle cx="5.5" cy="6.5" r="4.9" fill="none" stroke="#555" stroke-width="1.2" opacity="0.55"/><circle cx="5.7" cy="6.2" r="4.9" fill="url(#mg)" stroke="#8c8eb2" stroke-width="1"/><path d="M6.4 3 Q8.4 3.4 8.9 5.4" stroke="#fff" stroke-width="0.9" fill="none" opacity="0.9"/></svg></div>
<div class="t" style="left:670px;top:116px;letter-spacing:0.085px;color:#1a1a1a;letter-spacing:-0.04px">Approved Status</div>
<div style="left:762px;top:112px;width:130px;height:24px;border:1px solid #7b97bd;background:#eee;box-shadow:inset 0 0 0 1px #c9d8ea"></div>
<div style="left:872px;top:112px;width:20px;height:24px;border:1px solid #7b97bd;background:linear-gradient(#fff,#f4f7fb 45%,#c3d3e6)"></div>
<svg style="left:877px;top:122px" width="10" height="5" viewBox="0 0 10 5"><path d="M0 0 L10 0 L5 5 Z" fill="#2b2b2b"/></svg>
<div class="t" style="left:15px;top:146px;letter-spacing:-0.004px;color:#1a1a1a">PO#</div>
<div class="fld" style="left:97px;top:142px;width:100px;letter-spacing:0.161px;">PO#142</div>
<div class="t" style="left:210px;top:146px;letter-spacing:0.188px;color:#1a1a1a">Version</div>
<div class="fld dis" style="left:262px;top:142px;width:90px;letter-spacing:0.326px;">0</div>
<div class="t" style="left:370px;top:146px;letter-spacing:0.269px;color:#1414e6">Vendor Name</div>
<div class="fld dis" style="left:462px;top:142px;width:190px;letter-spacing:0.103px;">Werribee Party Hire Hoppers Cros<svg style="left:170px;top:0px" width="18" height="18" viewBox="0 0 18 18" ><defs><radialGradient id="mg" cx="0.42" cy="0.4" r="0.75"><stop offset="0" stop-color="#eefaff"/><stop offset="0.6" stop-color="#c8ecfc"/><stop offset="1" stop-color="#a8d8f4"/></radialGradient></defs><path d="M9.2 10.7 L14.2 15.4" stroke="#5e5e78" stroke-width="2.2" stroke-linecap="round"/><path d="M10 9.9 L15 14.6" stroke="#f4a030" stroke-width="2.1" stroke-linecap="round"/><circle cx="5.5" cy="6.5" r="4.9" fill="none" stroke="#555" stroke-width="1.2" opacity="0.55"/><circle cx="5.7" cy="6.2" r="4.9" fill="url(#mg)" stroke="#8c8eb2" stroke-width="1"/><path d="M6.4 3 Q8.4 3.4 8.9 5.4" stroke="#fff" stroke-width="0.9" fill="none" opacity="0.9"/></svg></div>
<div class="t" style="left:670px;top:146px;letter-spacing:0.131px;color:#1a1a1a">Authorizer</div>
<div class="fld dis" style="left:762px;top:142px;width:130px;"><svg style="left:110px;top:0px" width="18" height="18" viewBox="0 0 18 18" ><defs><radialGradient id="mg" cx="0.42" cy="0.4" r="0.75"><stop offset="0" stop-color="#eefaff"/><stop offset="0.6" stop-color="#c8ecfc"/><stop offset="1" stop-color="#a8d8f4"/></radialGradient></defs><path d="M9.2 10.7 L14.2 15.4" stroke="#5e5e78" stroke-width="2.2" stroke-linecap="round"/><path d="M10 9.9 L15 14.6" stroke="#f4a030" stroke-width="2.1" stroke-linecap="round"/><circle cx="5.5" cy="6.5" r="4.9" fill="none" stroke="#555" stroke-width="1.2" opacity="0.55"/><circle cx="5.7" cy="6.2" r="4.9" fill="url(#mg)" stroke="#8c8eb2" stroke-width="1"/><path d="M6.4 3 Q8.4 3.4 8.9 5.4" stroke="#fff" stroke-width="0.9" fill="none" opacity="0.9"/></svg></div>
<div class="t" style="left:15px;top:176px;letter-spacing:0.180px;color:#1a1a1a">Description</div>
<div class="fld" style="left:97px;top:172px;width:255px;"></div>
<div class="t" style="left:370px;top:176px;letter-spacing:0.092px;color:#1a1a1a">Contact</div>
<div class="fld dis" style="left:462px;top:172px;width:190px;letter-spacing:0.063px;">Brad&nbsp; Todd<svg style="left:170px;top:0px" width="18" height="18" viewBox="0 0 18 18" ><defs><radialGradient id="mg" cx="0.42" cy="0.4" r="0.75"><stop offset="0" stop-color="#eefaff"/><stop offset="0.6" stop-color="#c8ecfc"/><stop offset="1" stop-color="#a8d8f4"/></radialGradient></defs><path d="M9.2 10.7 L14.2 15.4" stroke="#5e5e78" stroke-width="2.2" stroke-linecap="round"/><path d="M10 9.9 L15 14.6" stroke="#f4a030" stroke-width="2.1" stroke-linecap="round"/><circle cx="5.5" cy="6.5" r="4.9" fill="none" stroke="#555" stroke-width="1.2" opacity="0.55"/><circle cx="5.7" cy="6.2" r="4.9" fill="url(#mg)" stroke="#8c8eb2" stroke-width="1"/><path d="M6.4 3 Q8.4 3.4 8.9 5.4" stroke="#fff" stroke-width="0.9" fill="none" opacity="0.9"/></svg></div>
<div class="t" style="left:670px;top:176px;letter-spacing:0.230px;color:#1a1a1a">Department</div>
<div class="fld" style="left:762px;top:172px;width:130px;"><svg style="left:110px;top:0px" width="18" height="18" viewBox="0 0 18 18" ><defs><radialGradient id="mg" cx="0.42" cy="0.4" r="0.75"><stop offset="0" stop-color="#eefaff"/><stop offset="0.6" stop-color="#c8ecfc"/><stop offset="1" stop-color="#a8d8f4"/></radialGradient></defs><path d="M9.2 10.7 L14.2 15.4" stroke="#5e5e78" stroke-width="2.2" stroke-linecap="round"/><path d="M10 9.9 L15 14.6" stroke="#f4a030" stroke-width="2.1" stroke-linecap="round"/><circle cx="5.5" cy="6.5" r="4.9" fill="none" stroke="#555" stroke-width="1.2" opacity="0.55"/><circle cx="5.7" cy="6.2" r="4.9" fill="url(#mg)" stroke="#8c8eb2" stroke-width="1"/><path d="M6.4 3 Q8.4 3.4 8.9 5.4" stroke="#fff" stroke-width="0.9" fill="none" opacity="0.9"/></svg></div>
<div class="t" style="left:15px;top:206px;letter-spacing:0.136px;color:#1a1a1a">Date Created</div>
<div class="fld dis" style="left:97px;top:202px;width:90px;letter-spacing:0.194px;">07/12/2017</div>
<div class="t" style="left:195px;top:206px;letter-spacing:0.108px;color:#1a1a1a">Req. Date</div>
<div style="left:262px;top:202px;width:73px;height:24px;border:1px solid #7b97bd;border-right-color:#a9bfdc;border-bottom-color:#a9bfdc;background:#fff;box-shadow:inset 1px 1px 0 #c5d4e8"></div>
<div class="t" style="left:264px;top:207px;letter-spacing:0.194px;">07/12/2017</div>
<div style="left:336px;top:202px;width:16px;height:24px;border:1px solid #e0e0e0;border-right-color:#8e8e8e;border-bottom-color:#8e8e8e;background:#eee;box-shadow:inset -1px -1px 0 #c6c6c6"></div>
<svg style="left:340px;top:212px" width="7" height="4" viewBox="0 0 7 4"><path d="M0 0 L7 0 L3.5 3.6 Z" fill="#6a7684"/></svg>
<div class="t" style="left:370px;top:206px;letter-spacing:0.097px;color:#1a1a1a">Created By</div>
<div class="fld dis" style="left:462px;top:202px;width:190px;letter-spacing:0.043px;">Mantra M Mantra</div>
<div style="left:672px;top:207px;width:12px;height:12px;border:1px solid #6e8296;background:linear-gradient(135deg,#fff 0%,#fff 28%,#fbd4b6 55%,#f4a56e 100%);box-shadow:inset 1px 1px 0 #fff"></div>
<div class="t" style="left:689px;top:206px;letter-spacing:0.213px;">View Cancelled Lines</div>
<div class="t" style="left:15px;top:238px;letter-spacing:0.148px;color:#1a1a1a">Reference #</div>
<div class="fld" style="left:97px;top:234px;width:90px;"></div>
<div class="t" style="left:195px;top:238px;letter-spacing:0.093px;color:#1a1a1a">Project</div>
<div class="fld" style="left:262px;top:234px;width:110px;letter-spacing:0.205px;">ORD-3614<svg style="left:90px;top:0px" width="18" height="18" viewBox="0 0 18 18" ><defs><radialGradient id="mg" cx="0.42" cy="0.4" r="0.75"><stop offset="0" stop-color="#eefaff"/><stop offset="0.6" stop-color="#c8ecfc"/><stop offset="1" stop-color="#a8d8f4"/></radialGradient></defs><path d="M9.2 10.7 L14.2 15.4" stroke="#5e5e78" stroke-width="2.2" stroke-linecap="round"/><path d="M10 9.9 L15 14.6" stroke="#f4a030" stroke-width="2.1" stroke-linecap="round"/><circle cx="5.5" cy="6.5" r="4.9" fill="none" stroke="#555" stroke-width="1.2" opacity="0.55"/><circle cx="5.7" cy="6.2" r="4.9" fill="url(#mg)" stroke="#8c8eb2" stroke-width="1"/><path d="M6.4 3 Q8.4 3.4 8.9 5.4" stroke="#fff" stroke-width="0.9" fill="none" opacity="0.9"/></svg></div>
<div style="left:462px;top:234px;width:139px;height:34px;border:1px solid #b9b9b9;background:#fff"></div>
<div class="t" style="left:462px;top:244px;letter-spacing:0.213px;width:139px;text-align:center">In House Comments</div>
<div style="left:9px;top:298px;width:1082px;height:363px;border:1px solid #b0b0b0;border-top-color:#fff;background:#fff"></div>
<div style="left:10px;top:299px;width:1079px;height:360px;border:1px solid #73879c;background:#fff"></div>
<div style="left:11px;top:300px;width:1077px;height:341px;overflow:hidden">
<div style="left:0;top:0;width:1200px;height:20px;background:#ff6c3a"></div>
<div style="left:0;top:38px;width:1200px;height:1px;background:#c2743a"></div>
<div class="th" style="left:0px;top:0;width:14px;letter-spacing:0.334px;">C</div>
<div style="left:14px;top:20px;width:1px;height:18px;background:#c2743a"></div>
<div class="th" style="left:15px;top:0;width:69px;letter-spacing:0.031px;">Product ID</div>
<div style="left:84px;top:20px;width:1px;height:18px;background:#c2743a"></div>
<div class="td" style="left:15px;top:20px;width:69px;letter-spacing:-0.001px;padding-left:1px">INSURAN...</div>
<div class="th" style="left:85px;top:0;width:79px;letter-spacing:0.130px;">Vendor SKU</div>
<div style="left:164px;top:20px;width:1px;height:18px;background:#c2743a"></div>
<div class="th" style="left:165px;top:0;width:79px;letter-spacing:0.139px;">GL Code</div>
<div style="left:244px;top:20px;width:1px;height:18px;background:#c2743a"></div>
<div class="td" style="left:165px;top:20px;width:79px;letter-spacing:0.326px;padding-left:1px">66017</div>
<div class="th" style="left:245px;top:0;width:179px;letter-spacing:0.180px;">Description</div>
<div style="left:424px;top:20px;width:1px;height:18px;background:#c2743a"></div>
<div class="td" style="left:245px;top:20px;width:179px;letter-spacing:0.145px;padding-left:1px">Insurance</div>
<div class="th" style="left:425px;top:0;width:54px;letter-spacing:0.205px;">Duration</div>
<div style="left:479px;top:20px;width:1px;height:18px;background:#c2743a"></div>
<div class="th" style="left:480px;top:0;width:29px;letter-spacing:-0.223px;">Qty</div>
<div style="left:509px;top:20px;width:1px;height:18px;background:#c2743a"></div>
<div class="td" style="left:480px;top:20px;width:29px;letter-spacing:0.326px;text-align:right;padding-right:1px">1</div>
<div class="th" style="left:510px;top:0;width:44px;letter-spacing:0.165px;">Unit</div>
<div style="left:554px;top:20px;width:1px;height:18px;background:#c2743a"></div>
<div class="td" style="left:510px;top:20px;width:44px;letter-spacing:0.162px;padding-left:1px">Each</div>
<div class="th" style="left:555px;top:0;width:69px;letter-spacing:0.099px;">Unit Price</div>
<div style="left:624px;top:20px;width:1px;height:18px;background:#c2743a"></div>
<div class="td" style="left:555px;top:20px;width:69px;letter-spacing:0.161px;text-align:right;padding-right:1px">0.00</div>
<div class="th" style="left:625px;top:0;width:59px;letter-spacing:0.164px;">Discount</div>
<div style="left:684px;top:20px;width:1px;height:18px;background:#c2743a"></div>
<div class="td" style="left:625px;top:20px;width:59px;letter-spacing:0.161px;text-align:right;padding-right:1px">0.00</div>
<div class="th" style="left:685px;top:0;width:59px;letter-spacing:0.274px;">Amount</div>
<div style="left:744px;top:20px;width:1px;height:18px;background:#c2743a"></div>
<div class="td" style="left:685px;top:20px;width:59px;letter-spacing:0.161px;text-align:right;padding-right:1px">0.00</div>
<div class="th" style="left:745px;top:0;width:34px;letter-spacing:0.082px;">Rec.</div>
<div style="left:779px;top:20px;width:1px;height:18px;background:#c2743a"></div>
<div class="td" style="left:745px;top:20px;width:34px;letter-spacing:0.326px;text-align:right;padding-right:1px">0</div>
<div class="th" style="left:780px;top:0;width:79px;letter-spacing:0.109px;">Aprv. Amount</div>
<div style="left:859px;top:20px;width:1px;height:18px;background:#c2743a"></div>
<div class="th" style="left:860px;top:0;width:79px;letter-spacing:0.178px;">Vouc.Amount</div>
<div style="left:939px;top:20px;width:1px;height:18px;background:#c2743a"></div>
<div class="th" style="left:940px;top:0;width:79px;letter-spacing:0.108px;">Req. Date</div>
<div style="left:1019px;top:20px;width:1px;height:18px;background:#c2743a"></div>
<div class="td" style="left:940px;top:20px;width:79px;letter-spacing:0.194px;padding-left:1px">08/12/2017</div>
<div class="th" style="left:1020px;top:0;width:79px;letter-spacing:0.094px;">Bill To</div>
<div class="td" style="left:1020px;top:20px;width:79px;letter-spacing:0.197px;padding-left:1px">ORD-3614-1</div>
<div style="left:1px;top:23px;width:12px;height:12px;border:1px solid #6e8296;background:linear-gradient(135deg,#fff 0%,#fff 28%,#fbd4b6 55%,#f4a56e 100%);box-shadow:inset 1px 1px 0 #fff"></div>
</div>
<div style="left:11px;top:641px;width:1076px;height:17px;background:#eee;border-top:1px solid #73879c;border-bottom:1px solid #73879c"></div>
<div style="left:11px;top:657px;width:1060px;height:1px;background:#a9c2e2"></div>
<div style="left:1071px;top:657px;width:17px;height:1px;background:#fff"></div>
<div style="left:11px;top:642px;width:1060px;height:1px;background:#c4d8ee"></div>
<div style="left:11px;top:642px;width:15px;height:14px;background:#eee"></div>
<svg style="left:17px;top:645px" width="5" height="9" viewBox="0 0 5 9"><path d="M5 0 L5 9 L0 4.5 Z" fill="#111"/></svg>
<div style="left:26px;top:641px;width:670px;height:16px;border:1px solid #f9b800;background:linear-gradient(#e39a6c 0,#f0c09e 1px,#ecb28a 50%,#e8a070 100%)"></div>
<div style="left:359px;top:645px;width:1px;height:9px;background:#8c8598"></div>
<div style="left:360px;top:646px;width:1px;height:9px;background:#f8d8c0"></div>
<div style="left:361px;top:645px;width:1px;height:9px;background:#8c8598"></div>
<div style="left:362px;top:646px;width:1px;height:9px;background:#f8d8c0"></div>
<div style="left:363px;top:645px;width:1px;height:9px;background:#8c8598"></div>
<div style="left:364px;top:646px;width:1px;height:9px;background:#f8d8c0"></div>
<div style="left:1071px;top:642px;width:16px;height:14px;background:#eee;border-left:1px solid #73879c;border-right:1px solid #73879c"></div>
<svg style="left:1078px;top:646px" width="5" height="9" viewBox="0 0 5 9"><path d="M0 0 L0 9 L5 4.5 Z" fill="#111"/></svg>
<div style="left:11px;top:665px;width:238px;height:23px;border:1px solid #cfcfcf;background:#fff"></div>
<div class="t" style="left:24px;top:670px;letter-spacing:0.221px;">C - Comments</div>
<div class="t" style="left:119.5px;top:670px;letter-spacing:0.147px;">* - Non Discountable</div>
<div style="left:835px;top:664px;width:59px;height:23px;border:1px solid #b9b9b9;background:#fff"></div>
<div class="t b" style="left:835px;top:669px;letter-spacing:-0.133px;width:59px;text-align:center">Total</div>
<div style="left:905px;top:664px;width:100px;height:24px;border:1px solid #7a7a7a;background:#eee"></div>
<div class="t b" style="left:907px;top:669px;letter-spacing:0.161px;">0.00</div>
<div style="left:8px;top:712px;width:1084px;height:25px;border:1px solid #c6c6c6;border-bottom-color:#fff;border-right-color:#fff"></div>
<div style="left:9px;top:713px;width:1082px;height:23px;border:1px solid #7a7a7a;border-bottom-color:#c6c9cc;border-right-color:#c6c9cc;background:#fff"></div>
</body></html>
